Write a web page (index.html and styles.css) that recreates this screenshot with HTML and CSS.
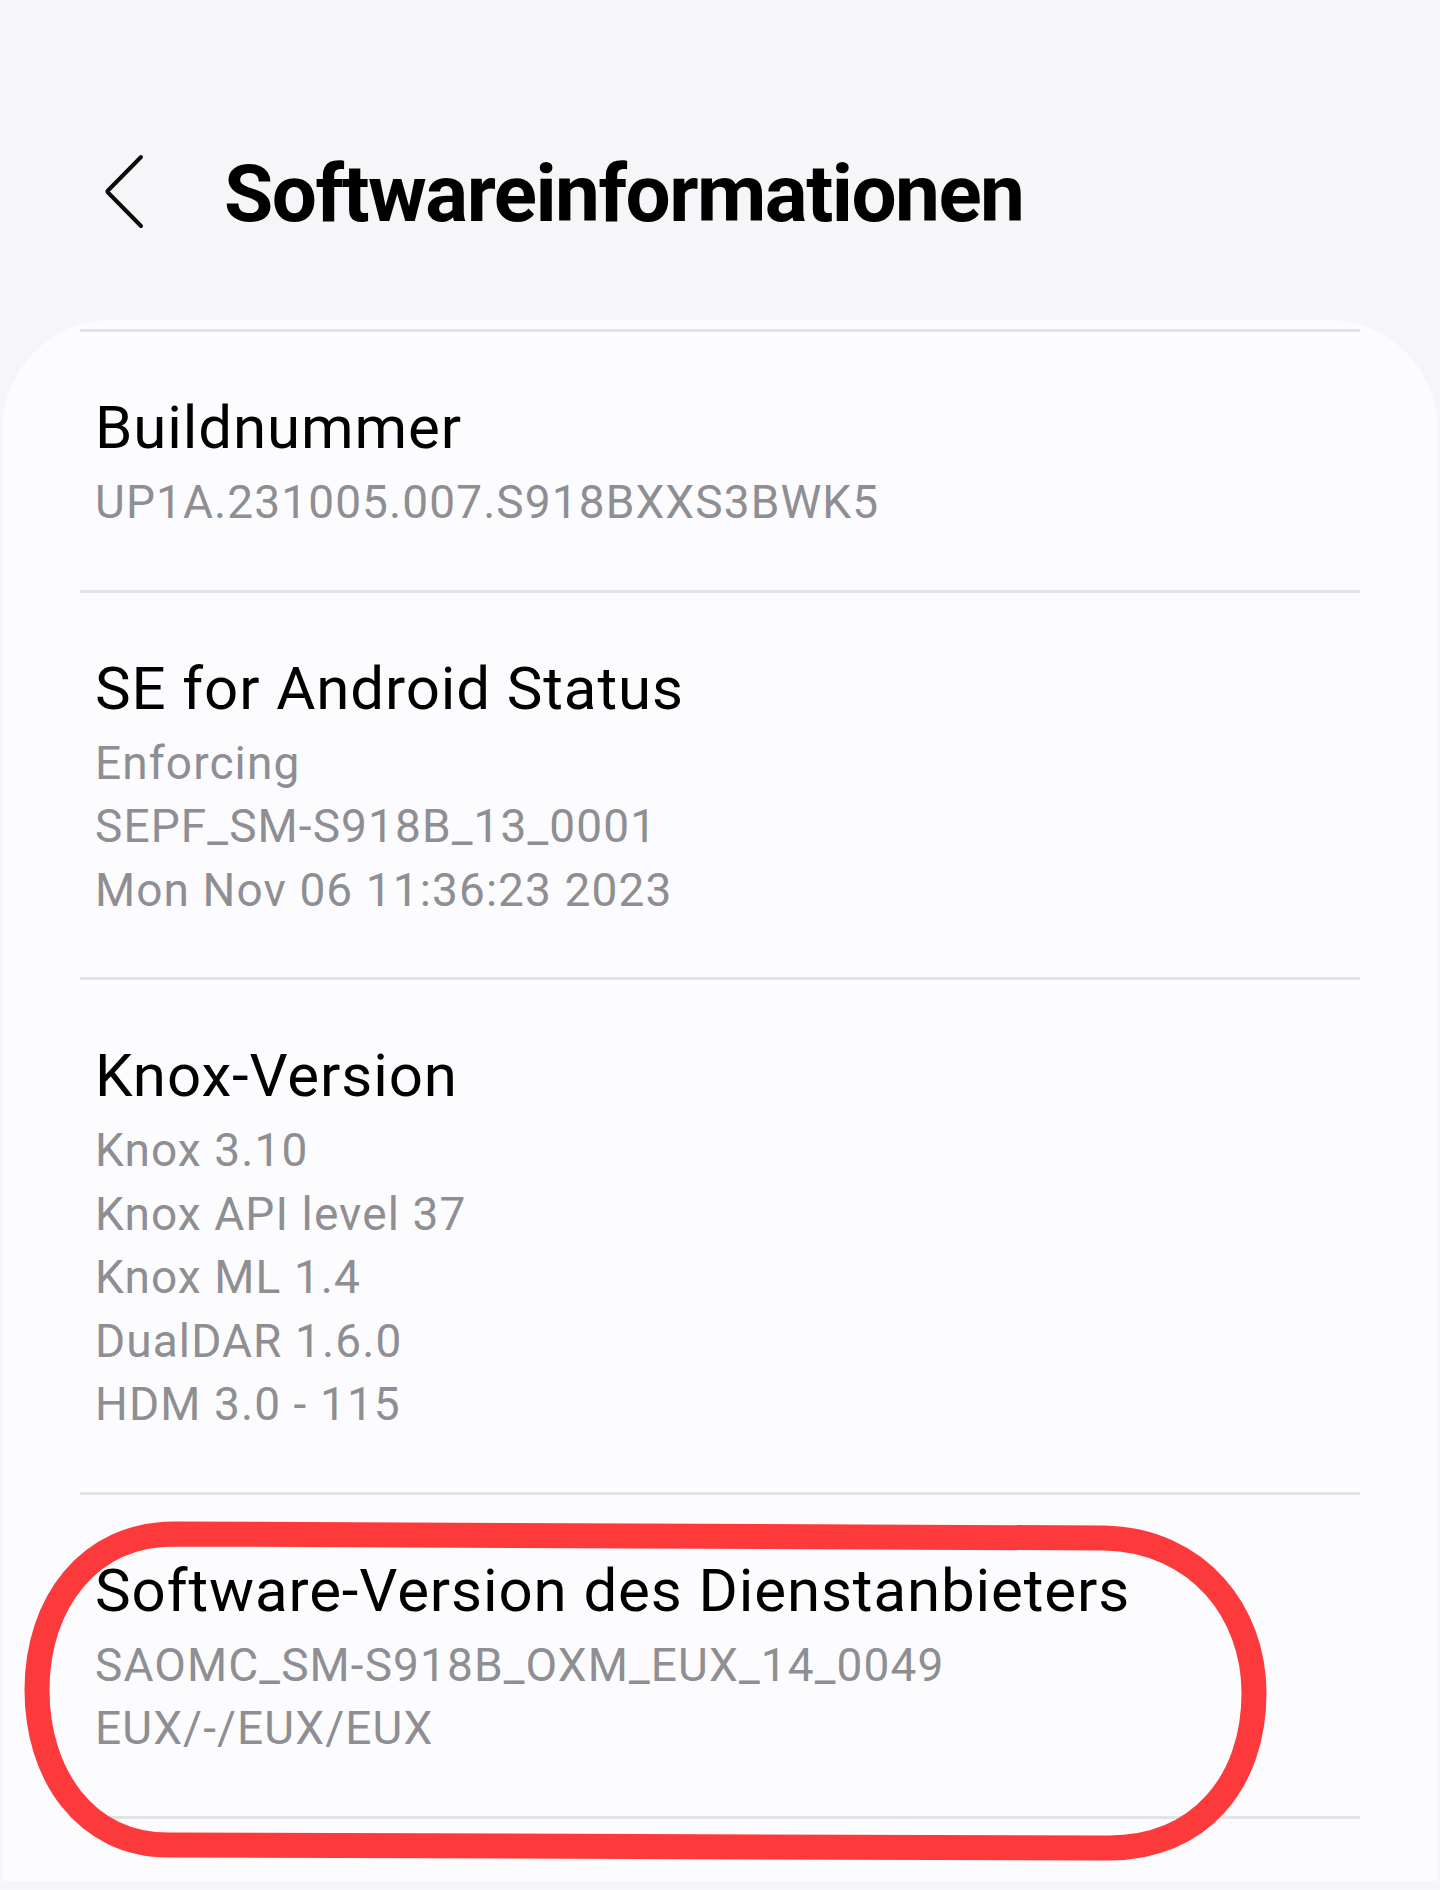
FILE: index.html
```html
<!DOCTYPE html>
<html lang="de">
<head>
  <meta charset="UTF-8" />
  <meta name="viewport" content="width=device-width, initial-scale=1.0"/>
  <title>Softwareinformationen</title>
  <link rel="stylesheet" href="styles.css">
</head>
<body>
  <header class="top-bar">
    <button class="back-btn" aria-label="Zurück">
      <svg width="48" height="80" viewBox="0 0 48 80">
        <path d="M41 6 L8 39.5 Q7 40.5 8 41.5 L41 75" fill="none" stroke="#0b0b0b" stroke-width="4" stroke-linecap="round" stroke-linejoin="round"/>
      </svg>
    </button>
    <h1>Softwareinformationen</h1>
  </header>

  <main class="list">
    <div class="item">
      <div class="item-title">Buildnummer</div>
      <div class="item-sub">UP1A.231005.007.S918BXXS3BWK5</div>
    </div>

    <div class="item">
      <div class="item-title">SE for Android Status</div>
      <div class="item-sub">Enforcing<br>SEPF_SM-S918B_13_0001<br>Mon Nov 06 11:36:23 2023</div>
    </div>

    <div class="item">
      <div class="item-title">Knox-Version</div>
      <div class="item-sub">Knox 3.10<br>Knox API level 37<br>Knox ML 1.4<br>DualDAR 1.6.0<br>HDM 3.0 - 115</div>
    </div>

    <div class="item marked">
      <div class="item-title">Software-Version des Dienstanbieters</div>
      <div class="item-sub">SAOMC_SM-S918B_OXM_EUX_14_0049<br>EUX/-/EUX/EUX</div>
      <!-- hand drawn circle on top of the row -->
      <svg class="scribble" width="1260" height="356" viewBox="0 0 1260 356">
        <path d="M155 21 L1085 25 C1180 27 1235 100 1235 180 C1235 270 1180 335 1090 335 L150 332 C65 332 18 260 18 177 C18 90 70 21 155 21 Z" fill="none" stroke="#fd3a3b" stroke-width="25" stroke-linejoin="round"/>
      </svg>
    </div>
  </main>
</body>
</html>
```

FILE: styles.css
```css
body {
  font-family: Roboto, "Liberation Sans", sans-serif;
  margin: 0;
  padding: 0;
  background-color: #f6f6f8;
  color: #000;
  min-height: 1890px;
  overflow: hidden;
}
.top-bar {
  display: flex;
  align-items: flex-start;
  padding: 144px 0 0 100px;
  height: 176px;
}
.back-btn {
  background: none;
  border: none;
  padding: 0;
  margin-top: 7px;
  width: 48px;
  height: 80px;
  cursor: pointer;
}
.back-btn svg {
  display: block;
}
.top-bar h1 {
  margin: 0 0 0 76px;
  font-size: 80px;
  line-height: 100px;
  font-weight: 700;
  letter-spacing: -1.5px;
}
.list {
  margin: 0 2px;
  padding: 9px 78px 0;
  background-color: #fcfcfe;
  border-radius: 110px 110px 0 0;
  min-height: 1561px;
  box-sizing: border-box;
}
.item {
  border-top: 3px solid #e3e3e6;
  padding: 60px 14px 55px 15px;
}
.item:last-child {
  border-bottom: 3px solid #e3e3e6;
}
.item-title {
  font-size: 60px;
  line-height: 72px;
  letter-spacing: 0.9px;
  margin-bottom: 7px;
}
.item-sub {
  font-size: 46px;
  line-height: 63.5px;
  color: #8e8e93;
  letter-spacing: 1.1px;
}
.marked {
  position: relative;
}
.scribble {
  position: absolute;
  left: -61px;
  top: 18px;
  pointer-events: none;
}
```
